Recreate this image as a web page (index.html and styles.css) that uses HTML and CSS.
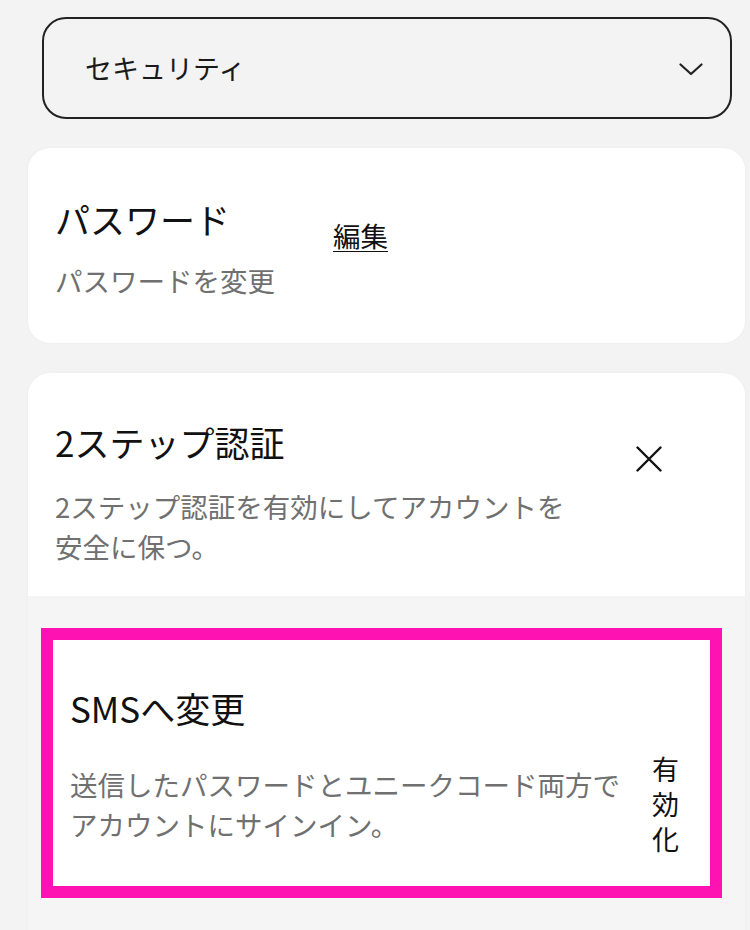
FILE: index.html
```html
<!DOCTYPE html>
<html lang="ja">
<head>
<meta charset="utf-8">
<title>セキュリティ</title>
<link rel="stylesheet" href="styles.css">
</head>
<body>
<main class="page">
  <div class="select">
    <span class="select-label">セキュリティ</span>
    <svg class="chevron" width="24" height="13" viewBox="0 0 24 13" aria-hidden="true">
      <path d="M1.5 1.5 L12 11 L22.5 1.5" fill="none" stroke="#222" stroke-width="2.2" stroke-linecap="round" stroke-linejoin="round"/>
    </svg>
  </div>

  <section class="card card-password">
    <div class="card-text narrow">
      <h2 class="title">パスワード</h2>
      <p class="desc">パスワードを変更</p>
    </div>
    <a class="edit-link" href="#">編集</a>
  </section>

  <section class="card card-2fa">
    <div class="card-head">
      <div class="card-text">
        <h2 class="title">2ステップ認証</h2>
        <p class="desc desc-2fa">2ステップ認証を有効にしてアカウントを安全に保つ。</p>
      </div>
      <svg class="close" width="26" height="26" viewBox="0 0 26 26" aria-hidden="true">
        <path d="M1.5 1.5 L24.5 24.5 M24.5 1.5 L1.5 24.5" fill="none" stroke="#111" stroke-width="2.4" stroke-linecap="round"/>
      </svg>
    </div>
    <div class="card-body">
      <div class="option">
        <h3 class="title">SMSへ変更</h3>
        <div class="option-row">
          <p class="desc option-desc">送信したパスワードとユニークコード両方でアカウントにサインイン。</p>
          <button class="enable">有効化</button>
        </div>
      </div>
    </div>
  </section>
</main>
</body>
</html>
```

FILE: styles.css
```css
html, body {
  margin: 0;
  padding: 0;
  background: #f3f3f3;
  overflow: hidden;
}

body {
  font-family: "Noto Sans CJK JP", "Noto Sans", sans-serif;
  color: #111;
}

.page {
  display: flex;
  flex-direction: column;
  padding: 17px 5px 0 28px;
}

.select {
  box-sizing: border-box;
  margin-left: 14px;
  width: 690px;
  height: 102px;
  border: 2px solid #222;
  border-radius: 24px;
  display: flex;
  align-items: center;
  justify-content: space-between;
  padding: 0 27px 0 41px;
}

.select-label {
  font-size: 27px;
  line-height: 36px;
  color: #1a1a1a;
}

.chevron {
  display: block;
  margin-top: 3px;
}

.card {
  background: #fff;
  border-radius: 22px;
  box-shadow: 0 0 3px rgba(0, 0, 0, 0.04);
}

.card-password {
  margin-top: 29px;
  height: 195px;
  box-sizing: border-box;
  padding: 49px 27px 0 27px;
  display: flex;
  align-items: flex-start;
}

.card-text.narrow {
  width: 278px;
  flex: none;
}

.title {
  margin: 0;
  font-size: 35px;
  line-height: 44px;
  font-weight: 400;
  color: #111;
}

.desc {
  margin: 0;
  font-size: 27.5px;
  line-height: 40px;
  color: #707070;
}

.card-password .desc {
  margin-top: 19px;
}

.edit-link {
  margin-top: 20px;
  font-size: 27.5px;
  line-height: 36px;
  color: #111;
  text-decoration: underline;
  text-decoration-thickness: 1px;
  text-underline-offset: 4px;
}

.card-2fa {
  margin-top: 30px;
  border-radius: 22px 22px 0 0;
  overflow: hidden;
}

.card-head {
  display: flex;
  align-items: flex-start;
  justify-content: space-between;
  padding: 47px 83px 30px 27px;
}

.desc-2fa {
  margin-top: 22px;
  width: 515px;
}

.close {
  display: block;
  margin-top: 26px;
  flex: none;
}

.card-body {
  background: #f5f5f5;
  padding: 32px 23px 80px 13px;
}

.option {
  border: 12px solid #ff12b2;
  background: #fff;
  display: flex;
  flex-direction: column;
  padding: 46px 30px 30px 17px;
}

.option-row {
  margin-top: 21px;
  display: flex;
  align-items: center;
  gap: 25px;
}

.option-desc {
  flex: 1;
}

.enable {
  flex: none;
  width: 28px;
  padding: 0;
  border: none;
  background: none;
  font-family: inherit;
  font-size: 27px;
  line-height: 35px;
  color: #111;
  text-align: left;
  word-break: break-all;
}
```
